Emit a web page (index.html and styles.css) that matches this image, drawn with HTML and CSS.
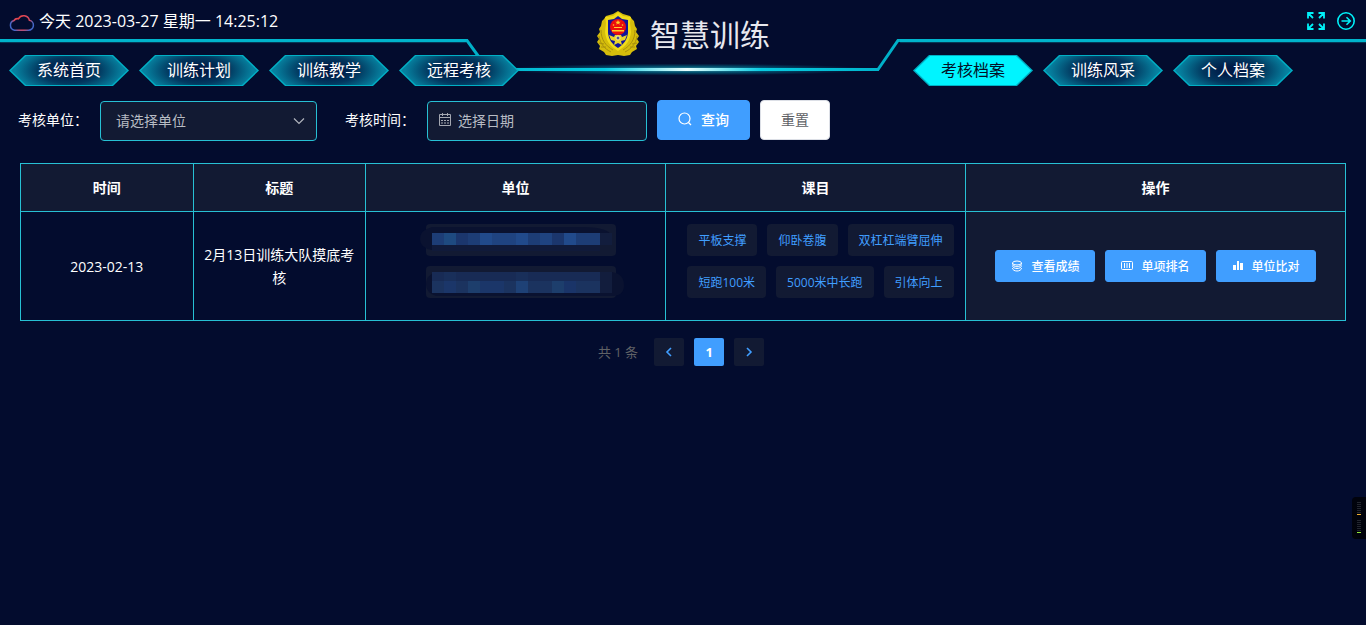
FILE: index.html
```html
<!DOCTYPE html>
<html lang="zh-CN">
<head>
<meta charset="utf-8">
<meta name="viewport" content="width=device-width, initial-scale=1">
<title>智慧训练</title>
<link rel="stylesheet" href="styles.css">
</head>
<body>
<header class="header">
  <div class="frame" aria-hidden="true">
    <span class="frame-line"></span>
    <svg class="frame-center" width="434" height="60" viewBox="0 0 434 60">
      <defs>
        <linearGradient id="beam"><stop offset="0" stop-color="#00b4cc"/><stop offset=".3" stop-color="#08cce2"/><stop offset=".51" stop-color="#e8ffff"/><stop offset=".7" stop-color="#08cce2"/><stop offset="1" stop-color="#00b4cc"/></linearGradient>
        <radialGradient id="glow"><stop offset="0" stop-color="#9ff" stop-opacity=".6"/><stop offset=".5" stop-color="#00d0e8" stop-opacity=".35"/><stop offset="1" stop-color="#00b4cc" stop-opacity="0"/></radialGradient>
      </defs>
      <ellipse cx="220" cy="31.500" rx="190" ry="6" fill="url(#glow)"/>
      <path d="M0 2.500H1L22 31.500M412 31.500L432 2.500H434" fill="none" stroke="#00b0c8" stroke-width="3"/>
      <rect x="21" y="30" width="392" height="3" fill="url(#beam)"/>
    </svg>
    <span class="frame-line"></span>
  </div>
  <div class="topbar">
    <div class="clock">
      <svg width="26" height="18" viewBox="0 0 26 18" fill="none" aria-hidden="true">
        <defs><radialGradient id="cloud" gradientUnits="userSpaceOnUse" cx="13" cy="8" r="13"><stop offset=".3" stop-color="#f0413c"/><stop offset=".6" stop-color="#d84a60"/><stop offset=".85" stop-color="#4467c8"/></radialGradient></defs>
        <path d="M5.500 16.200h14a5 5 0 0 0 .9-9.900 6 6 0 0 0-11-1.500A4 4 0 0 0 5 6.500a5 5 0 0 0 .5 9.700z" stroke="url(#cloud)" stroke-width="1.500"/>
      </svg>
      <time datetime="2023-03-27T14:25:12">今天 2023-03-27 星期一 14:25:12</time>
    </div>
    <div class="brand">
      <svg width="44" height="46" viewBox="0 0 44 46" aria-hidden="true">
        <path d="M22 1l5 3 7 2c1 2 2 3 4 5l1 5 2 3-1 3 3 4-2 3 2 3-3 4 1 3-5 3-2 3-6 1-6-1-6 1-6-1-2-3-5-3 1-3-3-4 2-3-2-3 3-4-1-3 2-3 1-5c2-2 3-3 4-5l7-2z" fill="#d5bd0b"/>
        <path d="M22 2l5 4 8 1-1 6 1 9c-1 9-5 14-13 19C14 36 10 31 9 22l1-9-1-6 8-1z" fill="#f1dc19"/>
        <path d="M22 6l4 3 6 1v13c-1 7-4 11-10 15-6-4-9-8-10-15V10l6-1z" fill="#11169a"/>
        <path d="M5 20c0 10 5 16 12 20M3 26c1 8 6 13 12 16M39 20c0 10-5 16-12 20M41 26c-1 8-6 13-12 16M8 34l-5-1M10 37l-5 0M34 37l5 0M36 34l5-1" fill="none" stroke="#a8900c" stroke-width="1"/>
        <circle cx="22" cy="17" r="8" fill="#ec0e0c"/>
        <path d="M22 10l.8 1.700h1.900l-1.500 1.200.5 1.900-1.700-1.200-1.700 1.200.5-1.900-1.500-1.200h1.900zM16 20h12v1.500H16zM18 17h8v1h-8z" fill="#ffd02a"/>
        <circle cx="17.500" cy="15" r=".8" fill="#ffd02a"/><circle cx="26.500" cy="15" r=".8" fill="#ffd02a"/>
        <path d="M13 25l5 2 1-2h6l1 2 5-2-2 5-4 1 1 4-4-2-4 2 1-4-4-1z" fill="#e9d52b"/>
        <circle cx="22" cy="28" r="2" fill="#4a55a0" stroke="#fff28c"/>
      </svg>
      <h1 class="brand-title">智慧训练</h1>
    </div>
    <div class="tools">
      <button class="tool" type="button" aria-label="全屏"><svg width="20" height="20" viewBox="0 0 20 20" fill="none" stroke="currentColor" stroke-width="1.800"><path d="M2 7.500V2h5.500M2 2l5 5M12.500 2H18v5.500M18 2l-5 5M2 12.500V18h5.500M2 18l5-5M18 12.500V18h-5.500M18 18l-5-5"/></svg></button>
      <button class="tool" type="button" aria-label="退出"><svg width="20" height="20" viewBox="0 0 20 20" fill="none" stroke="currentColor" stroke-width="1.600"><circle cx="10" cy="10" r="8.200"/><path d="M5.500 10h8.500M10.500 6.200l3.800 3.800-3.800 3.800"/></svg></button>
    </div>
  </div>
  <nav class="nav">
    <div class="nav-group">
      <a class="nav-item" href="#"><span>系统首页</span></a>
      <a class="nav-item" href="#"><span>训练计划</span></a>
      <a class="nav-item" href="#"><span>训练教学</span></a>
      <a class="nav-item" href="#"><span>远程考核</span></a>
    </div>
    <div class="nav-group">
      <a class="nav-item active" href="#" aria-current="page"><span>考核档案</span></a>
      <a class="nav-item" href="#"><span>训练风采</span></a>
      <a class="nav-item" href="#"><span>个人档案</span></a>
    </div>
  </nav>
</header>
<main class="main">
  <form class="filters">
    <div class="field">
      <label for="unit">考核单位：</label>
      <div class="control unit-control">
        <select id="unit"><option>请选择单位</option></select>
        <svg class="arrow" width="14" height="14" viewBox="0 0 14 14" fill="none" stroke="#b0b4bc" stroke-width="1.200" aria-hidden="true"><path d="M2 4.500l5 5 5-5"/></svg>
      </div>
    </div>
    <div class="field">
      <label for="date">考核时间：</label>
      <div class="control date-control">
        <svg width="14" height="14" viewBox="0 0 14 14" fill="none" stroke="#a4a8b2" aria-hidden="true"><path d="M1.500 1.500h11v11h-11zM1.500 4.500h11M4.500 0v3M9.500 0v3"/><path d="M3 7.500h8M3 10h8" stroke-dasharray="2 1"/></svg>
        <input id="date" type="text" placeholder="选择日期">
      </div>
    </div>
    <div class="actions">
      <button class="btn primary" type="button"><svg width="14" height="14" viewBox="0 0 14 14" fill="none" stroke="currentColor" stroke-width="1.200" aria-hidden="true"><circle cx="6.500" cy="6.500" r="5.500"/><path d="M10.500 10.500l2.500 2.500"/></svg><span>查询</span></button>
      <button class="btn plain" type="reset">重置</button>
    </div>
  </form>
  <table class="table">
    <colgroup><col><col><col class="col-wide"><col class="col-wide"><col class="col-ops"></colgroup>
    <thead><tr><th>时间</th><th>标题</th><th>单位</th><th>课目</th><th>操作</th></tr></thead>
    <tbody>
      <tr>
        <td>2023-02-13</td>
        <td>2月13日训练大队摸底考核</td>
        <td>
          <div class="tags">
            <span class="tag unit-tag"><svg width="190" height="32" viewBox="0 0 190 32" aria-hidden="true"><path d="M6 3h150q26 0 30 9v9H6v5q-12-2-12-11T6 3z" fill="#0a1230"/><path fill="#1d3d76" d="M6 9h12v12H6zM42 9h12v12H42zM102 9h12v12h-12zM150 9h24v12h-24z"/><path fill="#1e4a80" d="M18 9h12v12H18z"/><path fill="#1b366d" d="M30 9h12v12H30zM126 9h12v12h-12z"/><path fill="#214a8b" d="M54 9h12v12H54zM90 9h12v12H90zM138 9h12v12h-12z"/><path fill="#1f4380" d="M66 9h24v12H66zM114 9h12v12h-12z"/><path fill="#121d3d" d="M174 9h12v12h-12z"/><path fill="#101a3a" d="M6 21h168v6H6z"/></svg></span>
            <span class="tag unit-tag"><svg width="190" height="32" viewBox="0 0 190 32" aria-hidden="true"><path d="M10 6h176q12 2 12 13t-12 11H10Q0 27 0 18T10 6z" fill="#0a1230"/><path fill="#182b55" d="M6 6h168v9H6z"/><path fill="#192f5a" d="M18 6h12v9H18zM90 6h12v9H90z"/><path fill="#1b335f" d="M6 15h168v12H6z"/><path fill="#1b3669" d="M18 15h12v12H18zM54 15h24v12H54z"/><path fill="#1e4176" d="M90 15h12v12H90z"/><path fill="#1a3468" d="M138 15h12v12h-12z"/><path fill="#1d3e6c" d="M42 15h12v12H42zM126 15h12v12h-12z"/><path fill="#121d3d" d="M174 6h12v21h-12z"/></svg></span>
          </div>
        </td>
        <td>
          <div class="tags">
            <span class="tag">平板支撑</span><span class="tag">仰卧卷腹</span><span class="tag">双杠杠端臂屈伸</span>
            <span class="tag">短跑100米</span><span class="tag">5000米中长跑</span><span class="tag">引体向上</span>
          </div>
        </td>
        <td class="ops-cell">
          <div class="ops">
            <button class="btn primary small" type="button"><svg width="12" height="12" viewBox="0 0 12 12" fill="none" stroke="currentColor" aria-hidden="true"><ellipse cx="6" cy="3" rx="4.500" ry="2"/><path d="M1.500 3c0 5 9 5 9 0M1.500 5.500c0 4 9 4 9 0M1.500 8c0 4 9 4 9 0"/></svg><span>查看成绩</span></button>
            <button class="btn primary small" type="button"><svg width="12" height="12" viewBox="0 0 12 12" fill="none" stroke="currentColor" aria-hidden="true"><rect x=".5" y="1.500" width="11" height="8" rx="1"/><path d="M3.500 3v5M6 3v5M8.500 3v5"/></svg><span>单项排名</span></button>
            <button class="btn primary small" type="button"><svg width="12" height="12" viewBox="0 0 12 12" fill="currentColor" aria-hidden="true"><path d="M1 5h3v5H1zM5 1h2v9H5zM8 3h3v7H8z"/></svg><span>单位比对</span></button>
          </div>
        </td>
      </tr>
    </tbody>
  </table>
  <nav class="pager" aria-label="分页">
    <span class="total">共 1 条</span>
    <button type="button" class="page" aria-label="上一页"><svg width="12" height="12" viewBox="0 0 12 12" fill="none" stroke="currentColor" stroke-width="1.600"><path d="M8 2L4 6l4 4"/></svg></button>
    <button type="button" class="page current">1</button>
    <button type="button" class="page" aria-label="下一页"><svg width="12" height="12" viewBox="0 0 12 12" fill="none" stroke="currentColor" stroke-width="1.600"><path d="M4 2l4 4-4 4"/></svg></button>
  </nav>
</main>
<aside class="meter" aria-hidden="true">
  <svg width="4" height="32" viewBox="0 0 4 32"><path d="M0 .5h4M0 2.500h4M0 4.500h4M0 6.500h4M0 8.500h4M0 10.500h4M0 18.500h4M0 20.500h4M0 22.500h4M0 24.500h4M0 26.500h4M0 28.500h4" stroke="#23262f"/><path d="M0 12.500h4" stroke="#f0b030"/><path d="M0 30.500h4" stroke="#90e838"/></svg>
</aside>
</body>
</html>
```

FILE: styles.css
```css
* { box-sizing: border-box; }
body {
  margin: 0;
  min-height: 100vh;
  background: #030c2e;
  color: #fff;
  font: 14px/23px "Open Sans", "Noto Sans CJK SC", sans-serif;
}
button, input, select { font: inherit; color: inherit; margin: 0; }
svg { display: block; flex: none; }

.header { position: relative; }
.frame {
  position: absolute;
  inset: 38px 0 auto;
  display: flex;
}
.frame-line { flex: 1; height: 3px; margin-top: 1px; background: #00b4cc; box-shadow: 0 1px 1px #07405d; }
.topbar {
  position: relative;
  display: grid;
  grid-template-columns: 1fr auto 1fr;
  height: 55px;
}
.clock { display: flex; align-items: center; gap: 4px; height: 42px; padding-left: 9px; font-size: 16px; }
.clock svg { margin-top: 4px; }
.brand { display: flex; align-items: flex-start; gap: 10px; padding-top: 10px; }
.brand-title { margin: 2px 0 0; font-size: 30px; line-height: 46px; font-weight: 400; color: #e8e8ee; }
.tools { display: flex; justify-content: flex-end; align-items: center; gap: 10px; height: 41px; padding-right: 10px; }
.tool { padding: 0; border: 0; background: none; color: #00f0f8; }

.nav { position: relative; display: flex; justify-content: space-between; padding: 0 73px 0 9px; }
.nav-group { display: flex; gap: 10px; }
.nav-item {
  display: block;
  width: 120px;
  height: 31px;
  padding: 1px 2px;
  background: #00b0c5;
  clip-path: polygon(0 50%, 16px 0, 104px 0, 100% 50%, 104px 100%, 16px 100%);
  color: #fff;
  font-size: 16px;
  line-height: 29px;
  text-align: center;
  text-decoration: none;
}
.nav-item span {
  display: block;
  background: radial-gradient(ellipse 60px 26px, #001a46 15%, #02385f 50%, #0681a0 90%);
  clip-path: polygon(0 50%, 15px 0, 101px 0, 100% 50%, 101px 100%, 15px 100%);
}
.nav-item.active { color: #031026; }
.nav-item.active span { background: #00f4ff; }

.main { padding: 14px 20px 0; }
.filters { display: flex; align-items: flex-start; }
.field { display: flex; align-items: center; margin-top: 1px; }
.field label { width: 82px; margin-left: -2px; padding-bottom: 2px; line-height: 38px; }
.field + .field label { margin-left: 28px; }
.control {
  position: relative;
  display: flex;
  align-items: center;
  height: 40px;
  border: 1px solid #27c0d4;
  border-radius: 4px;
  background: #121a33;
  color: #b8bcc4;
}
.unit-control { width: 217px; }
.date-control { width: 220px; padding-left: 10px; gap: 6px; }
.date-control svg { margin-bottom: 2px; }
.control select, .control input {
  width: 100%;
  min-width: 0;
  height: 38px;
  border: 0;
  outline: 0;
  background: transparent;
  appearance: none;
}
.control select { padding: 0 15px 2px; }
.control input { padding: 0 0 2px; }
.control input::placeholder { color: #b8bcc4; opacity: 1; }
.arrow { position: absolute; right: 10px; pointer-events: none; }
.actions { display: flex; gap: 10px; margin-left: 10px; }
.btn {
  display: flex;
  align-items: center;
  justify-content: center;
  gap: 9px;
  height: 40px;
  padding: 0 20px 2px;
  border: 1px solid #409eff;
  border-radius: 4px;
  white-space: nowrap;
}
.primary { background: #409eff; color: #fff; font-weight: 500; }
.plain { background: #fff; border-color: #dcdfe6; color: #606266; }
.small { height: 32px; padding: 0 15px; border-radius: 3px; font-size: 12px; gap: 8px; }

.table {
  width: 100%;
  margin-top: 22px;
  border-collapse: collapse;
  table-layout: fixed;
}
.col-wide { width: 300px; }
.col-ops { width: 380px; }
.table th, .table td { border: 1px solid #27c0d4; text-align: center; }
.table th { height: 48px; padding: 0; background: #121a33; font-weight: 700; }
.table td { padding: 12px 10px; }
.table .ops-cell { background: #121a33; }
.tags { display: flex; flex-wrap: wrap; justify-content: center; gap: 10px; padding: 0 0 10px 10px; }
.table td:has(.tags) { padding: 12px 0; }
.tag {
  height: 32px;
  padding: 1px 11px 0;
  border-radius: 4px;
  background: #121a33;
  color: #409eff;
  font-size: 12px;
  line-height: 32px;
}
.unit-tag { padding: 0; }
.unit-tag svg { overflow: visible; }
.ops { display: flex; justify-content: center; gap: 10px; }

.pager { display: flex; justify-content: center; align-items: center; gap: 10px; margin: 17px 4px 0 0; font-size: 13px; line-height: 28px; }
.total { margin-right: 6px; color: #606266; }
.page {
  display: flex;
  align-items: center;
  justify-content: center;
  width: 30px;
  height: 28px;
  padding: 0;
  border: 0;
  border-radius: 2px;
  background: #121a33;
  color: #409eff;
}
.page.current { background: #409eff; color: #fff; font-weight: 700; }
.meter {
  position: fixed;
  right: 0;
  bottom: 86px;
  padding: 5px;
  border-radius: 4px 0 0 4px;
  background: #01030c;
}
```
